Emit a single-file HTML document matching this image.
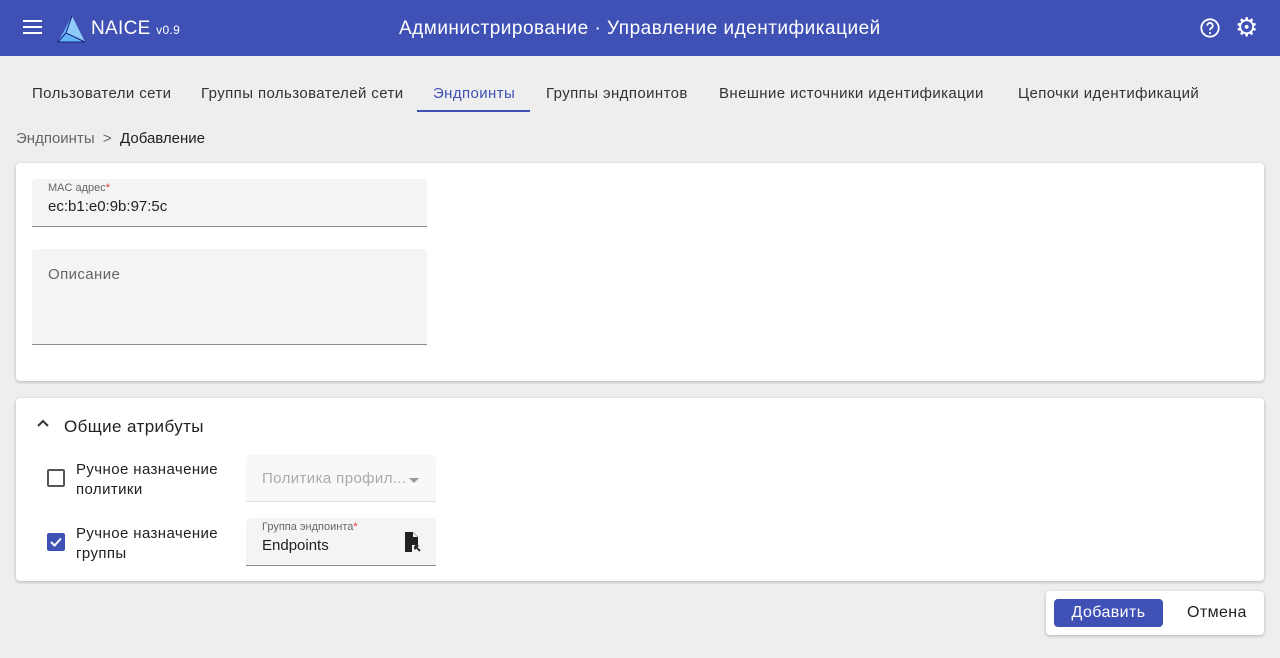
<!DOCTYPE html>
<html><head><meta charset="utf-8"><style>
*{box-sizing:border-box;margin:0;padding:0}
body{width:1280px;height:658px;background:#eeeeee;font-family:"Liberation Sans","DejaVu Sans",sans-serif;color:#212121;position:relative;overflow:hidden;letter-spacing:0.4px}
.hdr{position:absolute;left:0;top:0;width:1280px;height:56px;background:#3f51b5;color:#fff}
.abs{position:absolute}
.tab{position:absolute;top:85px;font-size:15px;color:#333}
.card{position:absolute;left:16px;width:1248px;background:#fff;border-radius:4px;box-shadow:0 1px 3px rgba(0,0,0,.25)}
.field{position:absolute;background:#f4f4f4;border-bottom:1px solid #8a8a8a;border-radius:4px 4px 0 0}
.lbl{position:absolute;font-size:11px;color:#666;letter-spacing:0}
.star{color:#e53935}
</style></head><body>
<div class="hdr">
 <div class="abs" style="left:23px;top:20px;width:19px;height:2px;background:#fff;box-shadow:0 6px 0 #fff,0 12px 0 #fff"></div>
 <svg class="abs" style="left:57px;top:15px" width="30" height="28" viewBox="0 0 30 28"><polygon points="15,1 1,27 28,27" fill="#64b5f6"/><polygon points="15,1 9,18 28,27" fill="#90caf9"/><polyline points="15,1 9,18 28,27 1,27 9,18" fill="none" stroke="#1a237e" stroke-width="1"/></svg>
 <div class="abs" style="left:91px;top:18px;font-size:19px;letter-spacing:0.3px">NAICE <span style="font-size:12px">v0.9</span></div>
 <div class="abs" style="left:399px;top:18px;font-size:19px;letter-spacing:0.5px">Администрирование · Управление идентификацией</div>
 <svg class="abs" style="left:1199px;top:17px" width="22" height="22" viewBox="0 0 24 24"><circle cx="12" cy="12" r="9.5" fill="none" stroke="#fff" stroke-width="2"/><path d="M9 9.5a3 3 0 1 1 4 2.8c-.8.4-1 1-1 1.7v.5" fill="none" stroke="#fff" stroke-width="2"/><circle cx="12" cy="17.5" r="1.2" fill="#fff"/></svg>
 <div class="abs" style="left:1235px;top:13px;font-size:26px;line-height:28px">⚙</div>
</div>
<div class="tab" style="left:32px">Пользователи сети</div>
<div class="tab" style="left:201px">Группы пользователей сети</div>
<div class="tab" style="left:433px;color:#3f51b5">Эндпоинты</div>
<div class="abs" style="left:417px;top:110px;width:113px;height:2px;background:#3f51b5"></div>
<div class="tab" style="left:546px">Группы эндпоинтов</div>
<div class="tab" style="left:719px">Внешние источники идентификации</div>
<div class="tab" style="left:1018px">Цепочки идентификаций</div>
<div class="abs" style="left:16px;top:130px;font-size:15px;color:#666;letter-spacing:0">Эндпоинты &nbsp;&gt;&nbsp; <span style="color:#212121">Добавление</span></div>
<div class="card" style="top:163px;height:218px"></div>
<div class="field" style="left:32px;top:179px;width:395px;height:48px"><div class="lbl" style="left:16px;top:3px">MAC адрес<span class="star">*</span></div><div class="abs" style="left:16px;top:19px;font-size:15px;letter-spacing:0">ec:b1:e0:9b:97:5c</div></div>
<div class="field" style="left:32px;top:249px;width:395px;height:96px"><div class="abs" style="left:16px;top:17px;font-size:15px;color:#666">Описание</div></div>
<div class="card" style="top:398px;height:183px"></div>
<svg class="abs" style="left:36px;top:416px" width="14" height="14" viewBox="0 0 14 14"><polyline points="2,10 7,5 12,10" fill="none" stroke="#333" stroke-width="2"/></svg>
<div class="abs" style="left:64px;top:417px;font-size:17px">Общие атрибуты</div>
<div class="abs" style="left:47px;top:469px;width:18px;height:18px;border:2px solid #555;border-radius:2px"></div>
<div class="abs" style="left:76px;top:460px;font-size:15px;line-height:20px">Ручное назначение<br>политики</div>
<div class="field" style="left:246px;top:455px;width:190px;height:47px;background:#f8f8f8;border-bottom-color:#ddd"><div class="abs" style="left:16px;top:15px;font-size:15px;color:#aaa">Политика профил...</div><div class="abs" style="left:163px;top:23px;border:5px solid transparent;border-top-color:#999"></div></div>
<div class="abs" style="left:47px;top:533px;width:18px;height:18px;background:#3f51b5;border-radius:2px"><svg width="18" height="18" viewBox="0 0 18 18"><polyline points="4,9 7.5,12.5 14,5.5" fill="none" stroke="#fff" stroke-width="2"/></svg></div>
<div class="abs" style="left:76px;top:524px;font-size:15px;line-height:20px">Ручное назначение<br>группы</div>
<div class="field" style="left:246px;top:518px;width:190px;height:48px"><div class="lbl" style="left:16px;top:3px">Группа эндпоинта<span class="star">*</span></div><div class="abs" style="left:16px;top:19px;font-size:15px;letter-spacing:0">Endpoints</div>
<svg class="abs" style="left:155px;top:13px" width="22" height="22" viewBox="0 0 22 22"><path d="M4 1h8l5 5v8h-6v7H4z" fill="#222"/><path d="M12 1.5v4.5h4.5z" fill="#f4f4f4"/><path d="M14 15l5 5M14 15h3.5M14 15v3.5" stroke="#222" stroke-width="1.8" fill="none"/></svg></div>
<div class="abs" style="left:1046px;top:591px;width:218px;height:44px;background:#fff;border-radius:4px;box-shadow:0 1px 3px rgba(0,0,0,.25)"></div>
<div class="abs" style="left:1054px;top:599px;width:109px;height:28px;background:#3f51b5;border-radius:4px;color:#fff;font-size:16px;text-align:center;line-height:28px">Добавить</div>
<div class="abs" style="left:1187px;top:604px;font-size:16px">Отмена</div>
</body></html>
